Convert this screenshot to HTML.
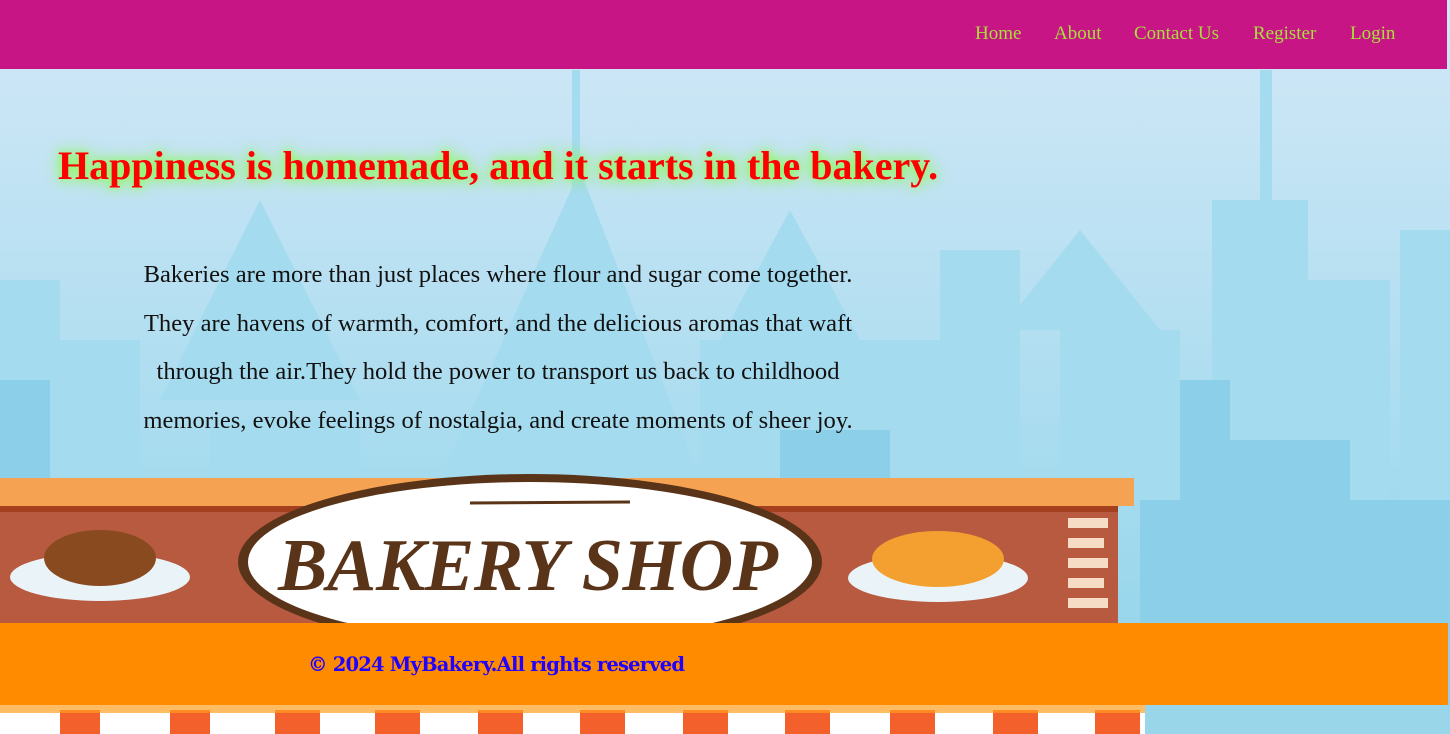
<!DOCTYPE html>
<html><head><style>
*{margin:0;padding:0;box-sizing:border-box}
body{width:1450px;height:734px;overflow:hidden;position:relative;background:linear-gradient(#d2e8f7,#a9dcef 60%,#8fd3ea);font-family:"Liberation Serif",serif}
nav{position:absolute;left:0;top:0;width:1447px;height:69px;background:#c71585}
nav a{position:absolute;top:23px;color:#a8e03a;font-size:19px;text-decoration:none}
h1{position:absolute;left:58px;top:142px;font-size:40px;font-weight:bold;color:#ff0000;text-shadow:0 0 10px #7cff3a,0 0 18px #9cff60;white-space:nowrap}
.p{position:absolute;left:80px;width:836px;top:251px;text-align:center;font-size:24.6px;line-height:48.7px;color:#111}
footer{position:absolute;left:0;top:623px;width:1448px;height:82px;background:#ff8c00}
footer span{position:absolute;left:308px;top:30px;color:#2200ff;font-weight:bold;font-size:19.5px;font-family:"DejaVu Serif","Liberation Serif",serif;letter-spacing:-0.8px}
</style></head><body>
<svg width="1450" height="734" style="position:absolute;left:0;top:0">
<g fill="#a5dbef">
<rect x="0" y="280" width="60" height="360"/><rect x="60" y="340" width="80" height="300"/>
<polygon points="160,400 260,200 360,400"/><rect x="210" y="420" width="150" height="80"/>
<polygon points="440,480 580,170 700,480"/><rect x="572" y="70" width="8" height="200"/>
<polygon points="720,340 790,210 860,340"/><rect x="700" y="340" width="240" height="160"/>
<rect x="940" y="250" width="80" height="240"/><polygon points="1000,330 1080,230 1160,330"/>
<rect x="1060" y="330" width="120" height="170"/><rect x="1212" y="200" width="96" height="300"/>
<rect x="1260" y="70" width="12" height="140"/><rect x="1300" y="280" width="90" height="220"/>
<rect x="1400" y="230" width="50" height="290"/>
</g>
<g fill="#8ccfe8">
<rect x="0" y="380" width="50" height="260"/><rect x="780" y="430" width="110" height="50"/>
<rect x="1140" y="500" width="310" height="240"/><rect x="1230" y="440" width="120" height="80"/>
<rect x="1180" y="380" width="50" height="140"/>
</g>
<rect x="0" y="478" width="1134" height="28" fill="#f5a253"/>
<rect x="0" y="506" width="1118" height="117" fill="#b85a40"/>
<rect x="0" y="506" width="1118" height="6" fill="#a4401e"/>
<g fill="#f6dcc4"><rect x="1068" y="518" width="40" height="10"/><rect x="1068" y="538" width="36" height="10"/><rect x="1068" y="558" width="40" height="10"/><rect x="1068" y="578" width="36" height="10"/><rect x="1068" y="598" width="40" height="10"/></g>
<ellipse cx="530" cy="562" rx="292" ry="88" fill="#5a3418"/>
<ellipse cx="530" cy="562" rx="282" ry="80" fill="#fff"/>
<text x="528" y="590" text-anchor="middle" font-family="Liberation Serif,serif" font-style="italic" font-weight="bold" font-size="74" fill="#5a3418" textLength="500">BAKERY SHOP</text>
<path d="M470 503 L630 502" stroke="#5a3418" stroke-width="3"/>
<ellipse cx="100" cy="577" rx="90" ry="24" fill="#eaf4f8"/><ellipse cx="100" cy="558" rx="56" ry="28" fill="#8a4a20"/>
<ellipse cx="938" cy="578" rx="90" ry="24" fill="#eaf4f8"/><ellipse cx="938" cy="559" rx="66" ry="28" fill="#f4a030"/>
<rect x="0" y="705" width="1145" height="29" fill="#fff"/>
<g fill="#f4602c"><rect x="60" y="710" width="40" height="24"/><rect x="170" y="710" width="40" height="24"/><rect x="275" y="710" width="45" height="24"/><rect x="375" y="710" width="45" height="24"/><rect x="478" y="710" width="45" height="24"/><rect x="580" y="710" width="45" height="24"/><rect x="683" y="710" width="45" height="24"/><rect x="785" y="710" width="45" height="24"/><rect x="890" y="710" width="45" height="24"/><rect x="993" y="710" width="45" height="24"/><rect x="1095" y="710" width="45" height="24"/></g>
<rect x="0" y="705" width="1145" height="8" fill="#ffa020" opacity="0.7"/>
<rect x="1145" y="705" width="305" height="29" fill="#9ad6ea"/>
</svg>
<nav><a style="left:975px">Home</a><a style="left:1054px">About</a><a style="left:1134px">Contact Us</a><a style="left:1253px">Register</a><a style="left:1350px">Login</a></nav>
<h1>Happiness is homemade, and it starts in the bakery.</h1>
<div class="p">Bakeries are more than just places where flour and sugar come together.<br>They are havens of warmth, comfort, and the delicious aromas that waft<br>through the air.They hold the power to transport us back to childhood<br>memories, evoke feelings of nostalgia, and create moments of sheer joy.</div>
<footer><span>© 2024 MyBakery.All rights reserved</span></footer>
</body></html>
